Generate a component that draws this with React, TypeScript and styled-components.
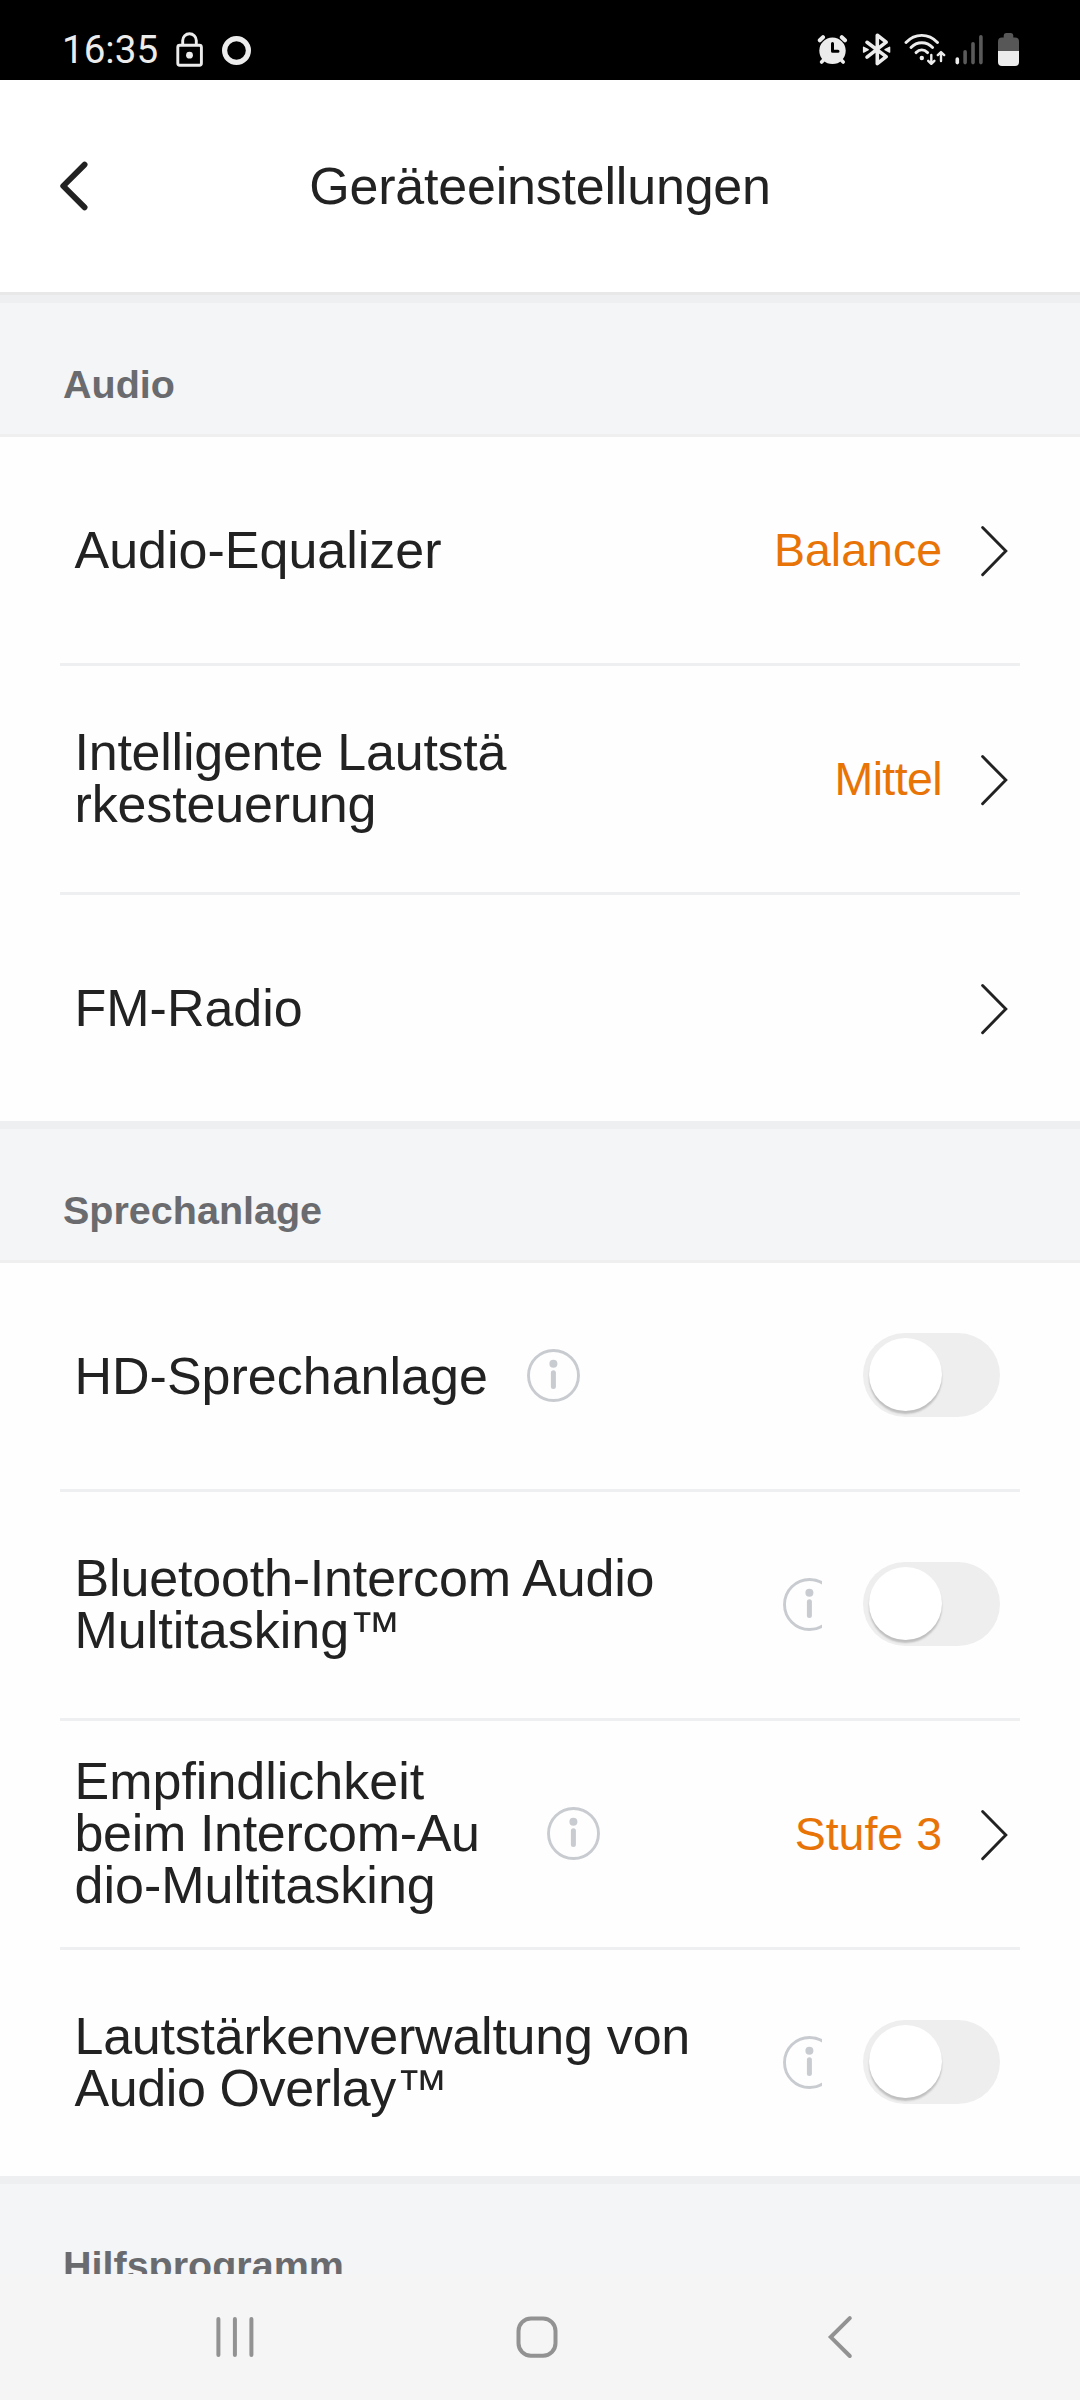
import React from "react";
import styled, { createGlobalStyle, css } from "styled-components";

const GlobalStyle = createGlobalStyle`
  *, *::before, *::after { box-sizing: border-box; }
  body { margin: 0; background: #ffffff; }
`;

const Screen = styled.div`
  width: 1080px;
  height: 2400px;
  display: flex;
  flex-direction: column;
  overflow: hidden;
  background: #fefefe;
  color: #222222;
  font-family: "Liberation Sans", Arial, Helvetica, sans-serif;
  font-variant-ligatures: none;
`;

const StatusBar = styled.div`
  flex: none;
  height: 80px;
  padding: 18px 60px 0 62px;
  display: flex;
  justify-content: space-between;
  background: #000000;
`;

const StatusGroup = styled.div`
  display: flex;
  align-items: flex-start;
  height: 62px;
`;

const Clock = styled.span`
  width: 100px;
  margin-right: 12px;
  font: 400 38.6px/63px Roboto, sans-serif;
  color: #ececec;
`;

const StatusIcon = styled.svg<{ $gap?: number }>`
  display: block;
  flex: none;
  margin-top: 12px;
  margin-left: ${(p) => p.$gap ?? 0}px;
`;

const Header = styled.header`
  flex: none;
  height: 215px;
  display: grid;
  grid-template-columns: 120px 1fr 120px;
  align-items: center;
  background: #ffffff;
  border-bottom: 3px solid #e8e8e8;
`;

const BackButton = styled.button`
  display: flex;
  padding: 0 0 0 58px;
  border: 0;
  background: none;
`;

const Title = styled.h1`
  margin: 0;
  text-align: center;
  font-size: 52px;
  line-height: 52px;
  font-weight: 400;
  letter-spacing: -0.2px;
`;

const Content = styled.main`
  flex: 1;
  min-height: 0;
  overflow: hidden;
`;

const SectionHeader = styled.div`
  height: 142px;
  padding: 53px 63px 0;
  border-top: 8px solid #eeeff1;
  border-bottom: 3px solid #efefef;
  background: #f4f5f7;
`;

const SectionTitle = styled.h2`
  margin: 0;
  font-size: 39.5px;
  line-height: 56px;
  font-weight: 700;
  color: #6a6b6e;
`;

const Rows = styled.div`
  padding: 0 60px;
`;

const Row = styled.div`
  height: 226px;
  padding: 0 11px 0 14.5px;
  display: flex;
  align-items: center;

  & + & {
    height: 229px;
    border-top: 3px solid #eeeff0;
  }
`;

const Label = styled.div<{ $multi: boolean; $width?: number }>`
  flex: none;
  font-size: 52px;
  line-height: 52px;
  white-space: pre;
  ${(p) => p.$width && css`width: ${p.$width}px;`}
  ${(p) => p.$multi && css`padding-bottom: 2px;`}
`;

const LabelLine = styled.span<{ $tracking: number }>`
  display: block;
  letter-spacing: ${(p) => p.$tracking}px;
`;

const InfoFrame = styled.div<{ $clipped?: boolean }>`
  flex: none;
  display: flex;
  width: ${(p) => (p.$clipped ? 39 : 53)}px;
  margin-bottom: 2px;
  overflow: hidden;
`;

const Trailing = styled.div`
  flex: 1;
  display: flex;
  align-items: center;
  justify-content: flex-end;
`;

const Value = styled.span<{ $tracking?: number }>`
  margin-right: 38px;
  font-size: 46.5px;
  line-height: 52px;
  letter-spacing: ${(p) => p.$tracking ?? 0}px;
  color: #e87407;
`;

const Chevron = styled.svg`
  display: block;
  flex: none;
  margin-top: 1px;
`;

const SwitchTrack = styled.button`
  width: 137px;
  height: 84px;
  margin: 0 9px 2px 0;
  padding: 5px 6px;
  display: flex;
  border: 0;
  border-radius: 42px;
  background: #eeeeee;
`;

const SwitchThumb = styled.span`
  width: 73px;
  height: 73px;
  border-radius: 50%;
  background: #ffffff;
  box-shadow: 0 3px 2px rgba(0, 0, 0, 0.2);
`;

const NavBar = styled.nav`
  flex: none;
  height: 126px;
  padding: 0 226px 0 214px;
  display: flex;
  align-items: center;
  justify-content: space-between;
  background: #f5f5f5;
`;

const NavIcon = styled.svg<{ $after?: number }>`
  display: block;
  margin-right: ${(p) => p.$after ?? 0}px;
`;

const InfoGlyph = styled.svg`
  display: block;
  flex: none;
`;

function InfoIcon({ clipped }: { clipped?: boolean }) {
  return (
    <InfoFrame $clipped={clipped}>
      <InfoGlyph width="53" height="53" viewBox="0 0 53 53">
        <circle cx="26.5" cy="26.5" r="25" fill="none" stroke="#c8cbd0" strokeWidth="2.9" />
        <circle cx="26.4" cy="14.8" r="4" fill="#c8cbd0" />
        <rect x="23.9" y="21.3" width="5" height="18.6" rx="2.5" fill="#c8cbd0" />
      </InfoGlyph>
    </InfoFrame>
  );
}

type Line = { text: string; tracking?: number };

type Item = {
  lines: Line[];
  labelWidth?: number;
  info?: "full" | "clipped";
  value?: Line;
  toggle?: boolean;
};

type Group = { title: string; items: Item[] };

const groups: Group[] = [
  {
    title: "Audio",
    items: [
      { lines: [{ text: "Audio-Equalizer" }], value: { text: "Balance" } },
      {
        lines: [
          { text: "Intelligente Lautstä", tracking: -0.24 },
          { text: "rkesteuerung", tracking: -0.15 },
        ],
        value: { text: "Mittel", tracking: -0.6 },
      },
      { lines: [{ text: "FM-Radio" }] },
    ],
  },
  {
    title: "Sprechanlage",
    items: [
      { lines: [{ text: "HD-Sprechanlage" }], labelWidth: 452.5, info: "full", toggle: true },
      {
        lines: [{ text: "Bluetooth-Intercom Audio", tracking: -0.17 }, { text: "Multitasking™" }],
        labelWidth: 708.5,
        info: "clipped",
        toggle: true,
      },
      {
        lines: [
          { text: "Empfindlichkeit" },
          { text: "beim Intercom-Au", tracking: -0.33 },
          { text: "dio-Multitasking" },
        ],
        labelWidth: 472.5,
        info: "full",
        value: { text: "Stufe 3" },
      },
      {
        lines: [
          { text: "Lautstärkenverwaltung von", tracking: -0.24 },
          { text: "Audio Overlay™", tracking: -0.4 },
        ],
        labelWidth: 708.5,
        info: "clipped",
        toggle: true,
      },
    ],
  },
  { title: "Hilfsprogramm", items: [] },
];

function SettingRow({ item }: { item: Item }) {
  return (
    <Row>
      <Label $multi={item.lines.length > 1} $width={item.labelWidth}>
        {item.lines.map((line) => (
          <LabelLine key={line.text} $tracking={line.tracking ?? 0}>
            {line.text}
          </LabelLine>
        ))}
      </Label>
      {item.info && <InfoIcon clipped={item.info === "clipped"} />}
      <Trailing>
        {item.toggle ? (
          <SwitchTrack role="switch" aria-checked={false}>
            <SwitchThumb />
          </SwitchTrack>
        ) : (
          <>
            {item.value && <Value $tracking={item.value.tracking}>{item.value.text}</Value>}
            <Chevron width="29" height="52" viewBox="980 525.5 29 52">
              <path d="M982.6 528.1 L1005.8 551.5 L982.6 575.2" fill="none" stroke="#222" strokeWidth="2.9" strokeLinecap="round" />
            </Chevron>
          </>
        )}
      </Trailing>
    </Row>
  );
}

function StatusIcons() {
  return (
    <StatusGroup>
      <StatusIcon width="32" height="38" viewBox="817 30 32 38">
        <g stroke="#ececec" strokeLinecap="round" fill="none">
          <path d="M819.8 40.3 L823 37.2 M845 40.3 L841.8 37.2" strokeWidth="4" />
          <path d="M821.6 62 L825 58.5 M843.2 62 L839.8 58.5" strokeWidth="3.6" />
        </g>
        <circle cx="832.5" cy="50.8" r="13.2" fill="#ececec" />
        <path d="M832.5 43.5 V51.3 H838" fill="none" stroke="#000" strokeWidth="3" strokeLinecap="round" strokeLinejoin="round" />
      </StatusIcon>
      <StatusIcon $gap={13} width="30" height="38" viewBox="862 30 30 38">
        <path
          d="M867 42.3 L886.2 56.6 L877.3 63.7 V35.2 L886.2 42.2 L867 57.2"
          fill="none"
          stroke="#ececec"
          strokeWidth="3.6"
          strokeLinecap="round"
          strokeLinejoin="round"
        />
        <path d="M863.6 47.3 L868.2 49.7 L863.6 52.1 Z M889.6 47.3 L885 49.7 L889.6 52.1 Z" fill="#ececec" stroke="#ececec" strokeWidth="1.4" strokeLinejoin="round" />
      </StatusIcon>
      <StatusIcon $gap={12} width="42" height="38" viewBox="904 30 42 38">
        <g fill="none" stroke="#ececec" strokeWidth="2.9" strokeLinecap="round" strokeLinejoin="round">
          <path d="M906 42.4 C915 33, 928.5 33, 937.5 42.4" />
          <path d="M911 47.5 C917 41.2, 926.5 41.2, 932.6 47.5" />
          <path d="M916 52.6 C919.5 49.2, 924 49.2, 927.6 52.6" />
          <path d="M931.3 55 V63.6 M928.2 60.8 L931.3 63.8 L934.4 60.8" strokeWidth="2.4" />
          <path d="M941 61 V52.3 M937.8 55.1 L941 52 L944.2 55.1" strokeWidth="2.4" />
        </g>
        <circle cx="921.8" cy="58" r="2.2" fill="#ececec" />
      </StatusIcon>
      <StatusIcon $gap={9} width="29" height="38" viewBox="955 30 29 38">
        <g strokeWidth="3.6" strokeLinecap="round">
          <path d="M957.3 59 V62.6" stroke="#ececec" />
          <path d="M965.1 51.8 V62.6 M973 43.8 V62.6 M980.9 36.8 V62.6" stroke="#5a5a5a" />
        </g>
      </StatusIcon>
      <StatusIcon $gap={13} width="23" height="38" viewBox="997 30 23 38">
        <path d="M998 51 V41.5 Q998 37.5 1002 37.5 H1003.7 V35.5 Q1003.7 33 1006 33 H1011 Q1013.3 33 1013.3 35.5 V37.5 H1015 Q1019 37.5 1019 41.5 V51 Z" fill="#575757" />
        <path d="M998 51 H1019 V62 Q1019 66 1015 66 H1002 Q998 66 998 62 Z" fill="#ececec" />
      </StatusIcon>
    </StatusGroup>
  );
}

export default function App() {
  return (
    <>
      <GlobalStyle />
      <Screen>
        <StatusBar>
          <StatusGroup>
            <Clock>16:35</Clock>
            <StatusIcon width="30" height="38" viewBox="174 30 30 38">
              <g fill="none" stroke="#ececec" strokeWidth="2.9">
                <rect x="177.8" y="45.2" width="23.6" height="20" rx="2" />
                <path d="M182.7 45 V40.5 A6.8 6.8 0 0 1 196.3 40.5 V45" />
              </g>
              <circle cx="189.5" cy="55.2" r="3.4" fill="#ececec" />
            </StatusIcon>
            <StatusIcon $gap={17} width="31" height="38" viewBox="221 30 31 38">
              <circle cx="236.5" cy="50.5" r="11.9" fill="none" stroke="#ececec" strokeWidth="5.2" />
            </StatusIcon>
          </StatusGroup>
          <StatusIcons />
        </StatusBar>

        <Header>
          <BackButton aria-label="Zurück">
            <svg width="32" height="52" viewBox="58 160 32 52">
              <path d="M84.6 164.6 L63.2 186 L84.6 207.4" fill="none" stroke="#222" strokeWidth="5.8" strokeLinecap="round" strokeLinejoin="round" />
            </svg>
          </BackButton>
          <Title>Geräteeinstellungen</Title>
        </Header>

        <Content>
          {groups.map((group) => (
            <section key={group.title}>
              <SectionHeader>
                <SectionTitle>{group.title}</SectionTitle>
              </SectionHeader>
              <Rows>
                {group.items.map((item) => (
                  <SettingRow key={item.lines[0].text} item={item} />
                ))}
              </Rows>
            </section>
          ))}
        </Content>

        <NavBar>
          <NavIcon width="42" height="46" viewBox="214 2314 42 46">
            <path d="M218.4 2319 V2355 M234.9 2319 V2355 M251.4 2319 V2355" stroke="#929292" strokeWidth="4" strokeLinecap="round" />
          </NavIcon>
          <NavIcon $after={8} width="46" height="46" viewBox="514 2314 46 46">
            <rect x="518.5" y="2318.4" width="37" height="37.4" rx="12.5" fill="none" stroke="#929292" strokeWidth="4" />
          </NavIcon>
          <NavIcon width="28" height="46" viewBox="826 2314 28 46">
            <path d="M849.8 2318.2 L830.8 2337.1 L849.8 2356" fill="none" stroke="#929292" strokeWidth="4" strokeLinecap="round" />
          </NavIcon>
        </NavBar>
      </Screen>
    </>
  );
}
